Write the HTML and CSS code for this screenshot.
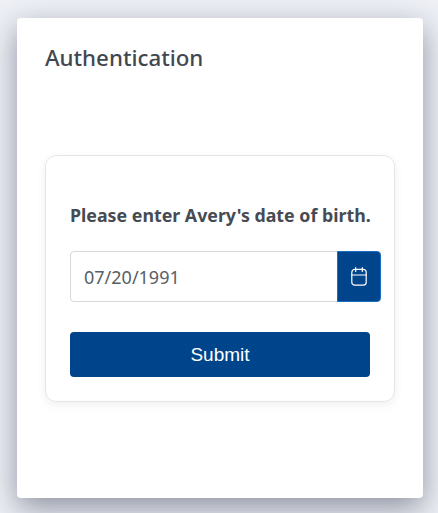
FILE: index.html
```html
<!DOCTYPE html>
<html lang="en">
<head>
<meta charset="utf-8">
<title>Authentication</title>
<link rel="stylesheet" href="styles.css">
</head>
<body>
<main class="modal">
  <h1 class="title">Authentication</h1>
  <section class="card">
    <h2 class="prompt">Please enter Avery's date of birth.</h2>
    <div class="date-group">
      <input class="date-input" type="text" value="07/20/1991" aria-label="Date of birth">
      <button class="date-btn" type="button" aria-label="Open calendar">
        <svg class="cal" viewBox="0 0 16 19" width="16" height="19" fill="none" stroke="#fff" stroke-width="1.2" stroke-linecap="round">
          <rect x="0.8" y="2.4" width="14.4" height="15.8" rx="3"/>
          <path d="M0.8 8H15.2M4.7 0.7V4.4M11.3 0.7V4.4"/>
        </svg>
      </button>
    </div>
    <button class="submit" type="button">Submit</button>
  </section>
</main>
</body>
</html>
```
FILE: styles.css
```css
* { box-sizing: border-box; }
html, body { height: 100%; }
body {
  margin: 0;
  padding: 18px 15px 15px 17px;
  background: #eef0f6;
  overflow: hidden;
}
.modal {
  width: 406px;
  height: 480px;
  padding: 23px 28px 0;
  background: #fff;
  border-radius: 4px;
  box-shadow: 0 10px 30px rgba(50, 54, 75, 0.5);
}
.title {
  margin: 0 0 81px;
  font: 500 22.3px/33px "Noto Sans", "Open Sans", sans-serif;
  color: #42474f;
}
.card {
  width: 350px;
  height: 247px;
  padding: 45px 24px 0;
  border: 1px solid #e4e5e8;
  border-radius: 11px;
  box-shadow: 0 3px 8px rgba(60, 64, 85, 0.08);
}
.prompt {
  margin: 0 -10px 22px 0;
  font: 700 17.8px/28px "Noto Sans", "Open Sans", sans-serif;
  color: #464b53;
  white-space: nowrap;
}
.date-group {
  display: flex;
  width: 311px;
  height: 51px;
  margin-bottom: 30px;
}
.date-input {
  width: 268px;
  height: 100%;
  padding: 0 13px;
  border: 1px solid #d6d8dc;
  border-radius: 4px 0 0 4px;
  font: 400 18px "Noto Sans", "Open Sans", sans-serif;
  color: #595e65;
  outline: none;
}
.date-btn {
  display: flex;
  align-items: center;
  justify-content: center;
  width: 44px;
  margin-left: -1px;
  padding: 0;
  background: #00458c;
  border: 1px solid #1b6fc2;
  border-radius: 0 4px 4px 0;
}
.submit {
  display: block;
  width: 300px;
  height: 45px;
  background: #00458c;
  border: 0;
  border-radius: 4px;
  font: 400 19px "Liberation Sans", Arial, sans-serif;
  color: #fff;
}
```
